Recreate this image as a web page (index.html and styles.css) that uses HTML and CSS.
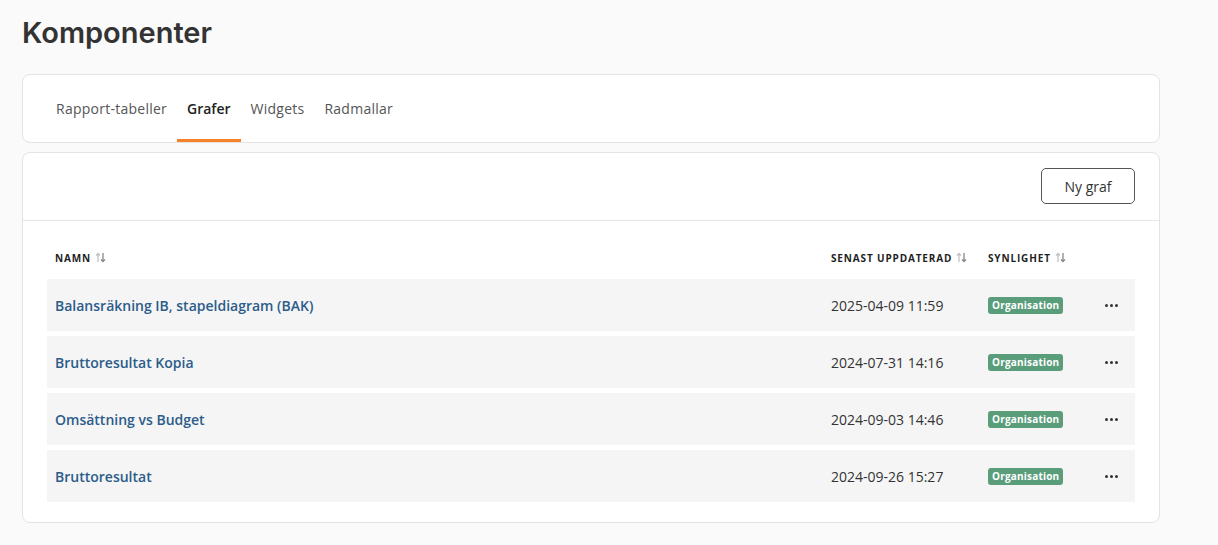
FILE: index.html
```html
<!DOCTYPE html>
<html lang="sv">
<head>
<meta charset="utf-8">
<title>Komponenter</title>
<link rel="stylesheet" href="styles.css">
</head>
<body>
<main class="page">
  <h1 class="title">Komponenter</h1>
  <nav class="card tabs">
    <a class="tab">Rapport-tabeller</a>
    <a class="tab active">Grafer</a>
    <a class="tab">Widgets</a>
    <a class="tab">Radmallar</a>
  </nav>
  <section class="card list">
    <div class="list-head">
      <button class="btn">Ny graf</button>
    </div>
    <div class="table">
      <div class="row head">
        <div class="cell th">NAMN <svg class="sort" viewBox="0 0 11 11"><path d="M3 10V1.5M1 3.5L3 1.5L5 3.5" stroke="#c2c2c2" stroke-width="1.3" fill="none"/><path d="M8 1v8.5M6 7.5L8 9.5L10 7.5" stroke="#888" stroke-width="1.3" fill="none"/></svg></div>
        <div class="cell th">SENAST UPPDATERAD <svg class="sort" viewBox="0 0 11 11"><path d="M3 10V1.5M1 3.5L3 1.5L5 3.5" stroke="#c2c2c2" stroke-width="1.3" fill="none"/><path d="M8 1v8.5M6 7.5L8 9.5L10 7.5" stroke="#888" stroke-width="1.3" fill="none"/></svg></div>
        <div class="cell th">SYNLIGHET <svg class="sort" viewBox="0 0 11 11"><path d="M3 10V1.5M1 3.5L3 1.5L5 3.5" stroke="#c2c2c2" stroke-width="1.3" fill="none"/><path d="M8 1v8.5M6 7.5L8 9.5L10 7.5" stroke="#888" stroke-width="1.3" fill="none"/></svg></div>
        <div class="cell"></div>
      </div>
      <div class="row item">
        <div class="cell"><a class="name">Balansräkning IB, stapeldiagram (BAK)</a></div>
        <div class="cell date">2025-04-09 11:59</div>
        <div class="cell"><span class="badge">Organisation</span></div>
        <div class="cell more"><span class="dots"><i></i><i></i><i></i></span></div>
      </div>
      <div class="row item">
        <div class="cell"><a class="name">Bruttoresultat Kopia</a></div>
        <div class="cell date">2024-07-31 14:16</div>
        <div class="cell"><span class="badge">Organisation</span></div>
        <div class="cell more"><span class="dots"><i></i><i></i><i></i></span></div>
      </div>
      <div class="row item">
        <div class="cell"><a class="name">Omsättning vs Budget</a></div>
        <div class="cell date">2024-09-03 14:46</div>
        <div class="cell"><span class="badge">Organisation</span></div>
        <div class="cell more"><span class="dots"><i></i><i></i><i></i></span></div>
      </div>
      <div class="row item">
        <div class="cell"><a class="name">Bruttoresultat</a></div>
        <div class="cell date">2024-09-26 15:27</div>
        <div class="cell"><span class="badge">Organisation</span></div>
        <div class="cell more"><span class="dots"><i></i><i></i><i></i></span></div>
      </div>
    </div>
  </section>
</main>
</body>
</html>
```
FILE: styles.css
```css
* { box-sizing: border-box; }
html, body { margin: 0; padding: 0; }
body {
  background: #fafafa;
  font-family: "Open Sans", "Noto Sans", sans-serif;
  color: #333;
}
.page {
  padding: 16px 22px 20px 22px;
  width: 1182px;
}
.title {
  margin: 0 0 24px 0;
  font-family: "Inter", "Lato", sans-serif;
  font-size: 29px;
  line-height: 34px;
  font-weight: 600;
  color: #333;
}
.card {
  background: #fff;
  border: 1px solid #e3e3e3;
  border-radius: 8px;
}
.tabs {
  display: flex;
  height: 69px;
  padding: 0 23px;
}
.tab {
  display: flex;
  align-items: center;
  padding: 2px 10px 0;
  font-size: 14px;
  letter-spacing: 0.25px;
  color: #555;
  border-bottom: 3px solid transparent;
}
.tab.active {
  color: #222;
  font-weight: 600;
  letter-spacing: 0;
  border-bottom-color: #f7812a;
}
.list {
  margin-top: 9px;
}
.list-head {
  display: flex;
  justify-content: flex-end;
  padding: 15px 24px 16px;
  border-bottom: 1px solid #e6e6e6;
}
.btn {
  height: 36px;
  width: 94px;
  background: #fff;
  border: 1px solid #555;
  border-radius: 5px;
  font-family: inherit;
  font-size: 14px;
  color: #333;
  font-weight: 500;
}
.table {
  padding: 15px 24px 20px;
  display: flex;
  flex-direction: column;
  gap: 5px;
}
.row {
  display: grid;
  grid-template-columns: 776px 157px 106px 51px;
  align-items: center;
}
.row.head {
  height: 43px;
  margin-bottom: -5px;
}
.row.item {
  height: 52px;
  background: #f5f5f5;
}
.cell {
  padding: 0 9px 0 8px;
  display: flex;
  align-items: center;
}
.th {
  font-size: 10px;
  font-weight: 700;
  letter-spacing: 0.85px;
  color: #1f1f1f;
  gap: 4px;
}
.sort {
  width: 11px;
  height: 11px;
}
.name {
  font-size: 14px;
  font-weight: 600;
  color: #2c5c8a;
}
.date {
  font-size: 14px;
  color: #333;
}
.badge {
  display: inline-block;
  background: #599d7b;
  color: #fff;
  font-size: 10px;
  font-weight: 700;
  letter-spacing: 0.2px;
  line-height: 17px;
  padding: 0 4px;
  border-radius: 3px;
}
.more {
  justify-content: center;
}
.dots {
  display: flex;
  gap: 2px;
}
.dots i {
  width: 3px;
  height: 3px;
  border-radius: 50%;
  background: #333;
}
```
